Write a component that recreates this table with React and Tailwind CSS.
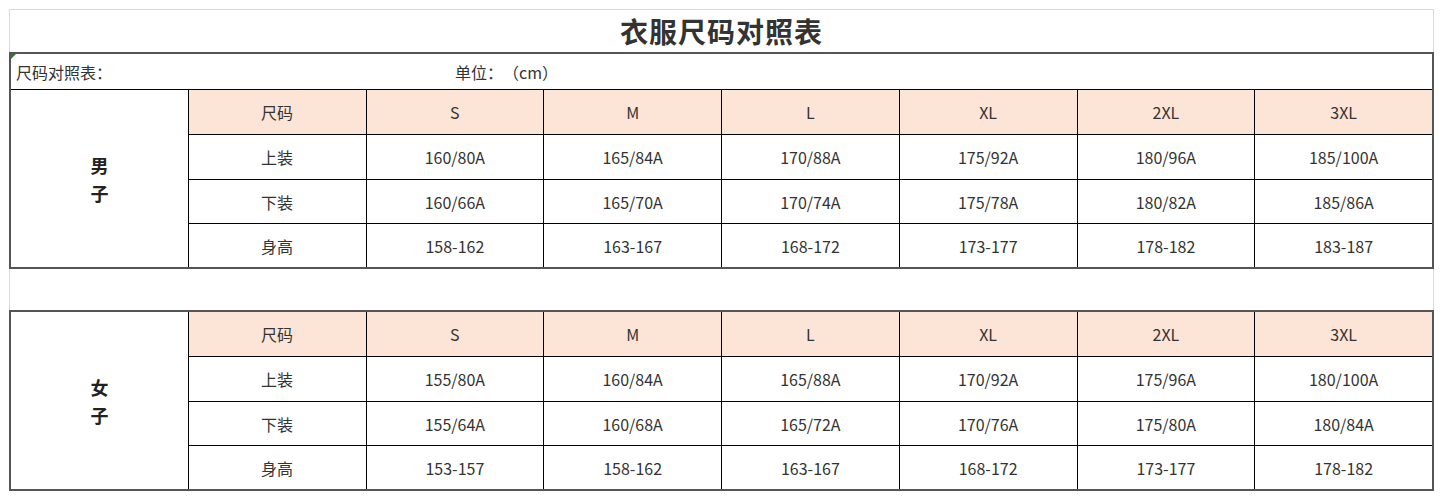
import React from "react";

const sizes = ["S", "M", "L", "XL", "2XL", "3XL"];

const tables = [
  {
    label: ["男", "子"],
    rows: [
      { name: "上装", values: ["160/80A", "165/84A", "170/88A", "175/92A", "180/96A", "185/100A"] },
      { name: "下装", values: ["160/66A", "165/70A", "170/74A", "175/78A", "180/82A", "185/86A"] },
      { name: "身高", values: ["158-162", "163-167", "168-172", "173-177", "178-182", "183-187"] },
    ],
  },
  {
    label: ["女", "子"],
    rows: [
      { name: "上装", values: ["155/80A", "160/84A", "165/88A", "170/92A", "175/96A", "180/100A"] },
      { name: "下装", values: ["155/64A", "160/68A", "165/72A", "170/76A", "175/80A", "180/84A"] },
      { name: "身高", values: ["153-157", "158-162", "163-167", "168-172", "173-177", "178-182"] },
    ],
  },
];

const SizeTable = ({ data }) => {
  return (
    <div className="grid grid-cols-8 grid-rows-[44px_44px_43px_43px] gap-px bg-black">
      {/* left merged cell */}
      <div className="row-span-4 bg-white flex flex-col items-center justify-center gap-[4px] text-[18px] font-bold text-[#222] leading-[24px]">
        {data.label.map((c, i) => (
          <span key={i}>{c}</span>
        ))}
      </div>

      {/* header */}
      <div className="bg-[#fce4d6] flex items-center justify-center">尺码</div>
      {sizes.map((s) => (
        <div key={s} className="bg-[#fce4d6] flex items-center justify-center">{s}</div>
      ))}

      {data.rows.map((row) => (
        <React.Fragment key={row.name}>
          <div className="bg-white flex items-center justify-center">{row.name}</div>
          {row.values.map((v, i) => (
            <div key={i} className="bg-white flex items-center justify-center">{v}</div>
          ))}
        </React.Fragment>
      ))}
    </div>
  );
};

const App = () => {
  return (
    <div className="bg-white w-[1443px] h-[500px] pt-[9px] pl-[9px] text-[16px] text-[#333] [text-spacing-trim:space-all] font-['Noto_Sans_CJK_SC','Noto_Sans',sans-serif]">
      <div className="w-[1425px]">
        {/* Title */}
        <div className="h-[43px] border-x border-t border-[#d9d9d9] flex items-center justify-center">
          <h1 className="text-[28px] font-bold text-[#333] tracking-[1px]">衣服尺码对照表</h1>
        </div>

        {/* Block 1 */}
        <div className="border-2 border-[#555]">
          <div className="relative h-[36px] border-b border-black flex items-center text-[16px]">
            <span className="absolute left-0 top-0 w-0 h-0 border-t-[5px] border-r-[5px] border-t-[#2e7d32] border-r-transparent" />
            <span className="pl-[5px] w-[444px]">尺码对照表：</span>
            <span>单位：（cm）</span>
          </div>
          <SizeTable data={tables[0]} />
        </div>

        {/* spacer row */}
        <div className="h-[41px] border-x border-[#d9d9d9]" />

        {/* Block 2 */}
        <div className="border-2 border-[#555]">
          <SizeTable data={tables[1]} />
        </div>
      </div>
    </div>
  );
};

export default App;
